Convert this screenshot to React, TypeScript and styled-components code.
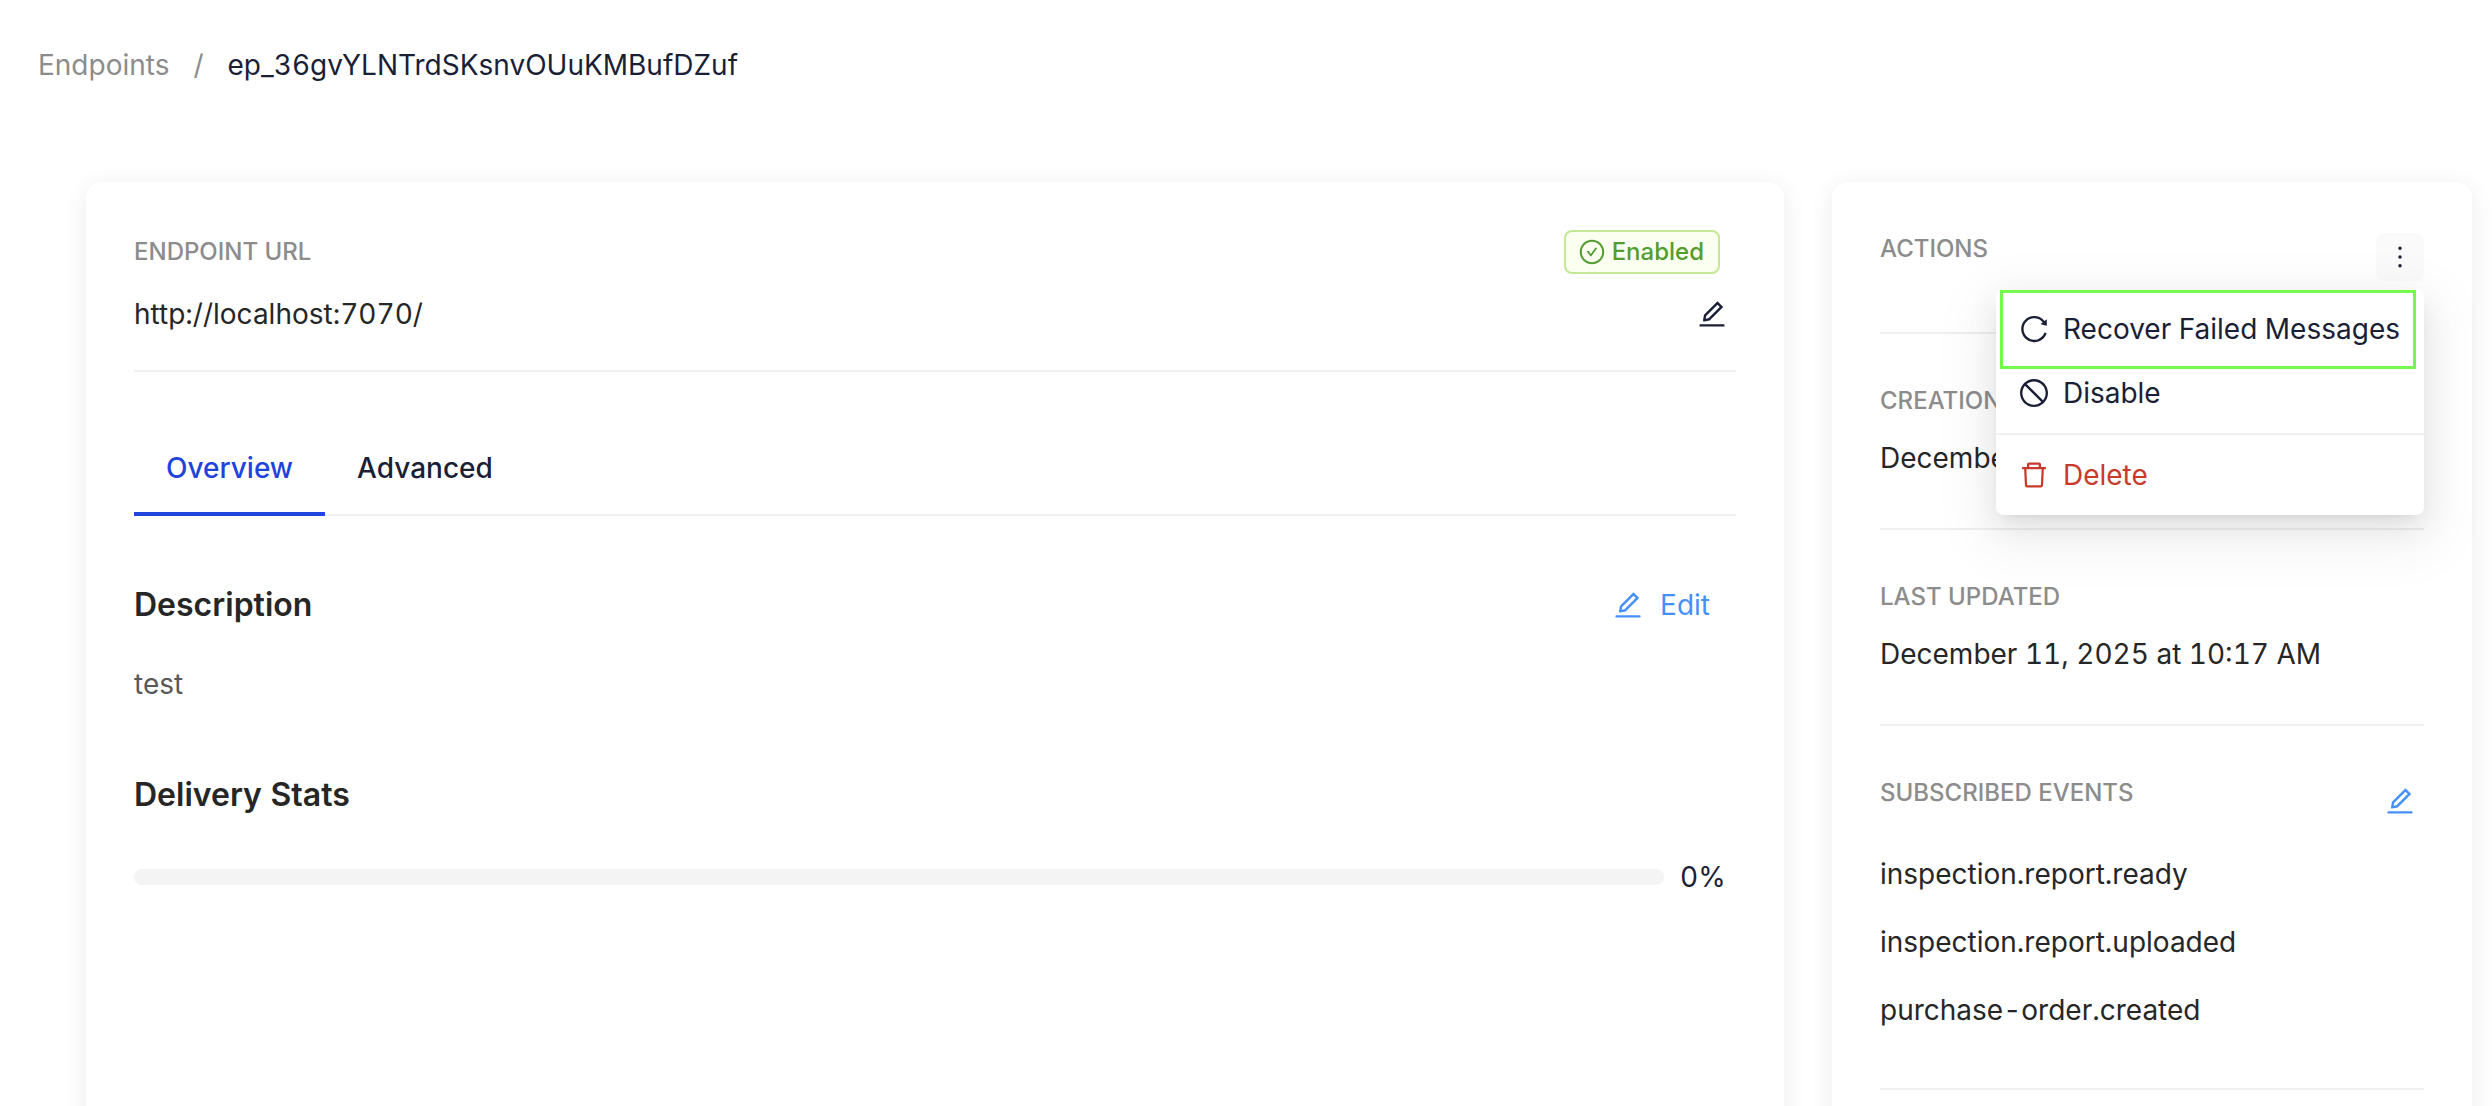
import React from "react";
import styled, { createGlobalStyle, css } from "styled-components";
import {
  AiOutlineCheckCircle,
  AiOutlineDelete,
  AiOutlineEdit,
  AiOutlineMore,
  AiOutlineReload,
  AiOutlineStop,
} from "react-icons/ai";

const color = {
  ink: "#1a1f36",
  text: "#262626",
  body: "#595959",
  muted: "#8c8c8c",
  line: "#f0f0f0",
  primary: "#1f44dc",
  link: "#458ff8",
  danger: "#c93a2b",
  success: "#559c30",
};

const GlobalStyle = createGlobalStyle`
  *, *::before, *::after { box-sizing: border-box; }
  body {
    margin: 0;
    background: #fff;
    color: ${color.ink};
    font-family: Inter, "Liberation Sans", sans-serif;
    font-size: 28px;
    line-height: 44px;
    font-variant-numeric: tabular-nums;
  }
  h2, p, ul, ol { margin: 0; padding: 0; }
  ul, ol { list-style: none; }
  button {
    margin: 0;
    padding: 0;
    border: 0;
    background: none;
    color: inherit;
    font: inherit;
    font-variant-numeric: inherit;
    cursor: pointer;
  }
  svg { display: block; flex: none; }
`;

const Page = styled.div`
  height: 100vh;
  overflow: hidden;
`;

const Breadcrumb = styled.ol`
  display: flex;
  gap: 24px;
  padding: 43px 38px 0;
`;

const Crumb = styled.li`
  display: flex;
  gap: 24px;
  color: ${color.ink};
`;

const CrumbLink = styled.a`
  color: ${color.muted};
  text-decoration: none;
`;

const Separator = styled.span`
  color: ${color.muted};
`;

const Columns = styled.main`
  display: grid;
  grid-template-columns: minmax(0, 1fr) 640px;
  gap: 48px;
  padding: 95px 20px 48px 86px;
`;

const Card = styled.section`
  padding: 48px;
  border-radius: 16px;
  background: #fff;
  box-shadow: 0 4px 24px rgba(0, 0, 0, 0.08);
`;

const Label = styled.div`
  color: ${color.muted};
  font-size: 24px;
  font-weight: 500;
  line-height: 38px;
  text-transform: uppercase;
`;

const Value = styled.div`
  color: ${color.text};
`;

const Row = styled.div`
  display: flex;
  align-items: center;
  justify-content: space-between;
`;

const UrlBlock = styled.div`
  display: flex;
  flex-direction: column;
  gap: 18px;
  padding-bottom: 34px;
  border-bottom: 2px solid ${color.line};
`;

const StatusTag = styled.span`
  display: flex;
  align-items: center;
  gap: 6px;
  margin-right: 16px;
  padding: 0 14px 0 12px;
  border: 2px solid #c3e996;
  border-radius: 8px;
  background: #faffef;
  color: ${color.success};
  font-size: 24px;
  font-weight: 500;
  line-height: 40px;
`;

const IconButton = styled.button<{ $tint?: string; $filled?: boolean }>`
  display: flex;
  align-items: center;
  justify-content: center;
  width: 48px;
  height: 48px;
  border-radius: 8px;
  color: ${(p) => p.$tint ?? color.ink};
  ${(p) => p.$filled && css`background: #fafafa;`}
`;

const UrlRow = styled(Row)`
  height: 44px;
`;

const TabList = styled.div`
  display: flex;
  margin-top: 50px;
  box-shadow: inset 0 -2px ${color.line};
`;

const Tab = styled.button<{ $active?: boolean }>`
  padding: 24px 32px 22px;
  border-bottom: 4px solid ${(p) => (p.$active ? color.primary : "transparent")};
  color: ${(p) => (p.$active ? color.primary : color.ink)};
  font-weight: 500;
`;

const Panel = styled.div`
  display: flex;
  flex-direction: column;
  gap: 64px;
  padding-top: 64px;
`;

const Block = styled.div`
  display: flex;
  flex-direction: column;
  gap: 32px;
`;

const Heading = styled.h2`
  color: ${color.text};
  font-size: 32px;
  font-weight: 600;
  line-height: 50px;
`;

const EditButton = styled.button`
  display: flex;
  align-items: center;
  gap: 16px;
  padding-right: 26px;
  color: ${color.link};
`;

const Description = styled.p`
  color: ${color.body};
`;

const Progress = styled.div`
  display: flex;
  align-items: center;
  gap: 16px;
  padding-top: 3px;
`;

const Track = styled.div`
  flex: 1;
  height: 16px;
  border-radius: 8px;
  background: #f4f4f4;
  overflow: hidden;
`;

const Fill = styled.div`
  height: 100%;
  background: ${color.primary};
`;

const Percent = styled.span`
  width: 56px;
`;

const Section = styled.div`
  display: flex;
  flex-direction: column;
  gap: 16px;
  margin-bottom: 48px;
  padding-bottom: 48px;
  border-bottom: 2px solid ${color.line};
`;

const SectionHead = styled.div`
  display: flex;
  justify-content: space-between;
`;

const HeadAction = styled.div`
  position: relative;
  padding: 3px 0;
`;

const EventList = styled.ul`
  display: flex;
  flex-direction: column;
  gap: 24px;
  padding: 8px 0;
  color: ${color.text};
`;

const Menu = styled.div`
  position: absolute;
  z-index: 1;
  top: calc(100% + 5px);
  right: 0;
  padding: 8px 0;
  border-radius: 8px;
  background: #fff;
  box-shadow:
    0 6px 12px -8px rgba(0, 0, 0, 0.12),
    0 12px 32px rgba(0, 0, 0, 0.08),
    0 18px 56px 16px rgba(0, 0, 0, 0.05);
`;

const MenuItem = styled.button<{ $danger?: boolean }>`
  position: relative;
  display: flex;
  align-items: center;
  gap: 13px;
  width: 100%;
  padding: 10px 24px 10px 22px;
  color: ${(p) => (p.$danger ? color.danger : color.ink)};
  white-space: nowrap;
`;

const Highlight = styled.span`
  position: absolute;
  inset: -7px 8px -8px 4px;
  border: 3px solid #75f94c;
`;

const MenuDivider = styled.div`
  height: 2px;
  margin: 8px 0;
  background: ${color.line};
`;

const events = [
  "inspection.report.ready",
  "inspection.report.uploaded",
  "purchase-order.created",
];

const delivered = 0;

function ActionsMenu() {
  return (
    <Menu role="menu">
      <MenuItem type="button" role="menuitem">
        <AiOutlineReload size={32} />
        Recover Failed Messages
        <Highlight />
      </MenuItem>
      <MenuItem type="button" role="menuitem">
        <AiOutlineStop size={32} />
        Disable
      </MenuItem>
      <MenuDivider role="separator" />
      <MenuItem type="button" role="menuitem" $danger>
        <AiOutlineDelete size={32} />
        Delete
      </MenuItem>
    </Menu>
  );
}

export default function App() {
  return (
    <Page>
      <GlobalStyle />
      <nav>
        <Breadcrumb>
          <Crumb>
            <CrumbLink href="#endpoints">Endpoints</CrumbLink>
            <Separator>/</Separator>
          </Crumb>
          <Crumb>ep_36gvYLNTrdSKsnvOUuKMBufDZuf</Crumb>
        </Breadcrumb>
      </nav>
      <Columns>
        <Card>
          <UrlBlock>
            <Row>
              <Label>Endpoint URL</Label>
              <StatusTag>
                <AiOutlineCheckCircle size={28} />
                Enabled
              </StatusTag>
            </Row>
            <UrlRow>
              <Value>http://localhost:7070/</Value>
              <IconButton type="button" aria-label="Edit endpoint URL">
                <AiOutlineEdit size={32} />
              </IconButton>
            </UrlRow>
          </UrlBlock>
          <TabList role="tablist">
            <Tab type="button" role="tab" aria-selected="true" $active>
              Overview
            </Tab>
            <Tab type="button" role="tab" aria-selected="false">
              Advanced
            </Tab>
          </TabList>
          <Panel role="tabpanel">
            <Block>
              <Row>
                <Heading>Description</Heading>
                <EditButton type="button">
                  <AiOutlineEdit size={32} />
                  Edit
                </EditButton>
              </Row>
              <Description>test</Description>
            </Block>
            <Block>
              <Heading>Delivery Stats</Heading>
              <Progress>
                <Track>
                  <Fill style={{ width: `${delivered}%` }} />
                </Track>
                <Percent>{delivered}%</Percent>
              </Progress>
            </Block>
          </Panel>
        </Card>
        <Card>
          <Section>
            <SectionHead>
              <Label>Actions</Label>
              <HeadAction>
                <IconButton type="button" aria-label="More actions" $filled>
                  <AiOutlineMore size={32} />
                </IconButton>
                <ActionsMenu />
              </HeadAction>
            </SectionHead>
          </Section>
          <Section>
            <Label>Creation date</Label>
            <Value>December 11, 2025 at 10:17 AM</Value>
          </Section>
          <Section>
            <Label>Last updated</Label>
            <Value>December 11, 2025 at 10:17 AM</Value>
          </Section>
          <Section>
            <SectionHead>
              <Label>Subscribed events</Label>
              <HeadAction>
                <IconButton type="button" aria-label="Edit subscribed events" $tint={color.link}>
                  <AiOutlineEdit size={32} />
                </IconButton>
              </HeadAction>
            </SectionHead>
            <EventList>
              {events.map((name) => (
                <li key={name}>{name}</li>
              ))}
            </EventList>
          </Section>
        </Card>
      </Columns>
    </Page>
  );
}
